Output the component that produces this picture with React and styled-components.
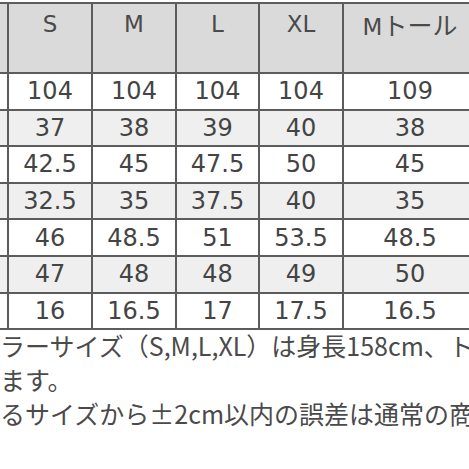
import React from "react";
import styled, { createGlobalStyle } from "styled-components";

const GlobalStyle = createGlobalStyle`
  html, body {
    margin: 0;
    padding: 0;
    background: #fff;
  }
  body {
    width: 469px;
    height: 469px;
    overflow: hidden;
    font-family: "DejaVu Sans", "Noto Sans CJK JP", sans-serif;
    color: #444;
  }
`;

const Page = styled.div`
  width: 469px;
  height: 469px;
  overflow: hidden;
  padding-top: 2px;
  box-sizing: border-box;
`;

const Table = styled.table`
  border-collapse: collapse;
  table-layout: fixed;
  margin-left: -77px;
  width: 553px;
`;

const HeadCell = styled.th`
  width: ${(p) => p.w}px;
  height: 70px;
  padding: 6px 0 0;
  box-sizing: border-box;
  vertical-align: top;
  background: #dadada;
  border: 2px solid #5c5c5c;
  font-weight: normal;
  font-size: 23px;
  line-height: 28px;
  color: #4a4a4a;
  text-align: center;
  white-space: nowrap;
  font-family: "DejaVu Sans", "Noto Sans CJK JP", sans-serif;
`;

const Kana = styled.span`
  font-family: "Noto Sans CJK JP", sans-serif;
  font-size: 25px;
  line-height: 28px;
`;

const Cell = styled.td`
  height: 34.6px;
  padding: 0;
  border: 2px solid #5c5c5c;
  background: ${(p) => (p.shade ? "#efefef" : "#fff")};
  text-align: center;
  vertical-align: middle;
  font-size: 24px;
  line-height: 1;
  color: #444;
`;

const Notes = styled.div`
  margin-top: -2px;
  font-family: "Noto Sans CJK JP", sans-serif;
  font-size: 25px;
  color: #4a4a4a;
  line-height: 34px;
  white-space: nowrap;
`;

const NoteLine = styled.div``;

const cols = [
  { label: "", w: 84 },
  { label: "S", w: 84 },
  { label: "M", w: 84 },
  { label: "L", w: 83 },
  { label: "XL", w: 84 },
  { label: "M", kana: "トール", w: 134 },
];

const rows = [
  ["104", "104", "104", "104", "109"],
  ["37", "38", "39", "40", "38"],
  ["42.5", "45", "47.5", "50", "45"],
  ["32.5", "35", "37.5", "40", "35"],
  ["46", "48.5", "51", "53.5", "48.5"],
  ["47", "48", "48", "49", "50"],
  ["16", "16.5", "17", "17.5", "16.5"],
];

export default function App() {
  return (
    <Page>
      <GlobalStyle />
      <Table>
        <thead>
          <tr>
            {cols.map((c, i) => (
              <HeadCell key={i} w={c.w}>
                {c.label}
                {c.kana && <Kana>{c.kana}</Kana>}
              </HeadCell>
            ))}
          </tr>
        </thead>
        <tbody>
          {rows.map((r, i) => (
            <tr key={i}>
              <Cell shade={i % 2 === 1} />
              {r.map((v, j) => (
                <Cell key={j} shade={i % 2 === 1}>
                  {v}
                </Cell>
              ))}
            </tr>
          ))}
        </tbody>
      </Table>
      <Notes>
        <NoteLine>ラーサイズ（S,M,L,XL）は身長158cm、トール</NoteLine>
        <NoteLine>ます。</NoteLine>
        <NoteLine>るサイズから±2cm以内の誤差は通常の商品</NoteLine>
      </Notes>
    </Page>
  );
}
